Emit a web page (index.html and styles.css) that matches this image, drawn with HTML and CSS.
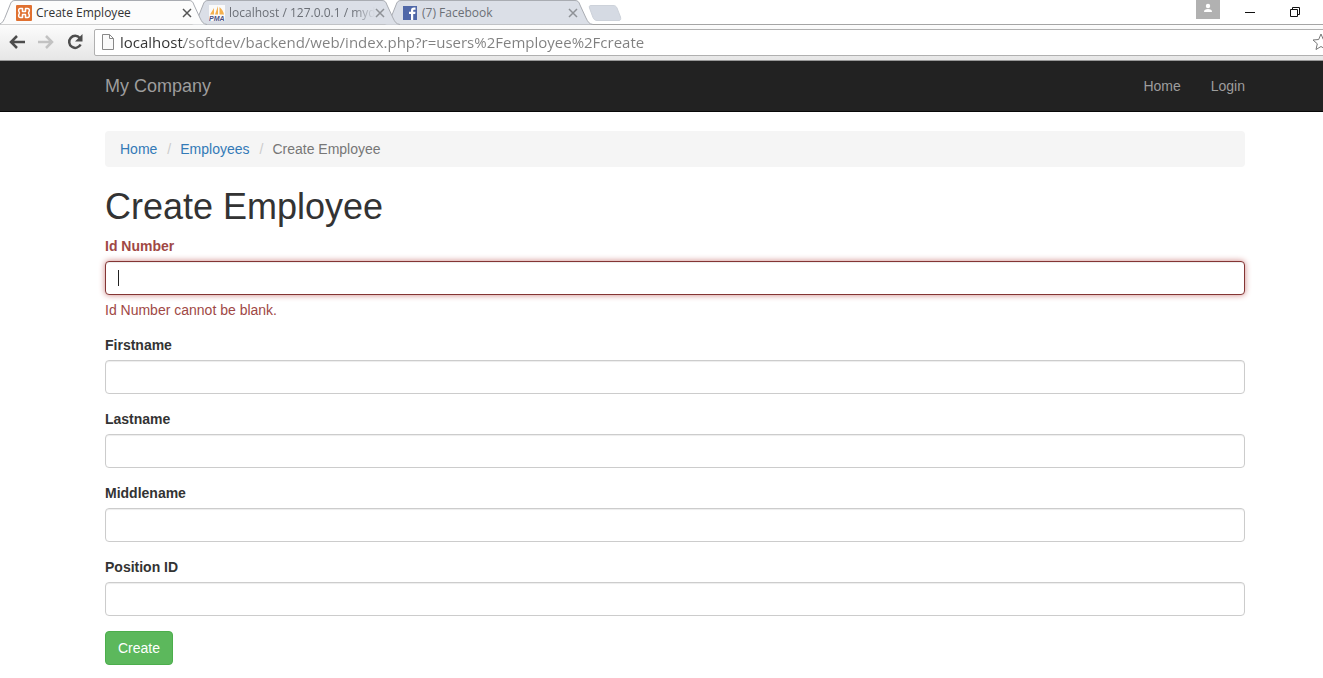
FILE: index.html
```html
<!DOCTYPE html>
<html lang="en">
<head>
<meta charset="utf-8">
<title>Create Employee</title>
<link rel="stylesheet" href="styles.css">
</head>
<body>
<div class="browser">
  <div class="tabstrip">
    <div class="tab tab-active">
      <svg class="tab-shape" viewBox="0 0 208 25" preserveAspectRatio="none"><path d="M0 24.5C4 23 5 20 7 15L11 5C12 2 13 .5 16 .5H190C193 .5 194 2 195 5L201 18C203 22 204 24 208 24.5"/></svg>
      <svg class="favicon" viewBox="0 0 16 16"><rect width="16" height="16" rx="1" fill="#e07030"/><path d="M4.500 3.500H6.500V6.500H9.500V3.500H11.500C13 3.500 13.500 4.500 13.300 6L12.500 8 13.300 10C13.500 11.500 13 12.500 11.500 12.500H9.500V9.500H6.500V12.500H4.500C3 12.500 2.500 11.500 2.700 10L3.500 8 2.700 6C2.500 4.500 3 3.500 4.500 3.500Z" fill="none" stroke="#fff" stroke-width="1.500" stroke-linejoin="round"/></svg>
      <span class="tab-title">Create Employee</span>
      <button class="tab-close" aria-label="Close tab"><svg viewBox="0 0 10 10"><path d="M1 1L9 9M9 1L1 9"/></svg></button>
    </div>
    <div class="tab tab-second">
      <svg class="tab-shape" viewBox="0 0 208 25" preserveAspectRatio="none"><path d="M0 24.5C4 23 5 20 7 15L11 5C12 2 13 .5 16 .5H190C193 .5 194 2 195 5L201 18C203 22 204 24 208 24.5"/></svg>
      <svg class="favicon" viewBox="0 0 16 16"><rect width="16" height="16" fill="#fafafa"/><path d="M1 9.500L5 3V9.500ZM6 9.500L9 1V9.500ZM10.500 9.500V2C13 4 14.500 7 15 9.500Z" fill="#f4b04e"/><text class="pma" x="0" y="16">PMA</text></svg>
      <span class="tab-title tab-title-long">localhost / 127.0.0.1 / myd</span>
      <button class="tab-close" aria-label="Close tab"><svg viewBox="0 0 10 10"><path d="M1 1L9 9M9 1L1 9"/></svg></button>
    </div>
    <div class="tab">
      <svg class="tab-shape" viewBox="0 0 208 25" preserveAspectRatio="none"><path d="M0 24.5C4 23 5 20 7 15L11 5C12 2 13 .5 16 .5H190C193 .5 194 2 195 5L201 18C203 22 204 24 208 24.5"/></svg>
      <svg class="favicon" viewBox="0 0 16 16"><rect x="1" y="1" width="14" height="14" fill="#5068a8"/><path d="M9 15V9H7V6.800H9V5.500C9 3.500 10 2.600 12 2.600H13.500V4.800H12.300C11.500 4.800 11.200 5.100 11.200 5.800V6.800H13.500L13.200 9H11.200V15Z" fill="#fff"/></svg>
      <span class="tab-title">(7) Facebook</span>
      <button class="tab-close" aria-label="Close tab"><svg viewBox="0 0 10 10"><path d="M1 1L9 9M9 1L1 9"/></svg></button>
    </div>
    <button class="new-tab" aria-label="New tab"><svg viewBox="0 0 34 16"><path d="M3 .5H25C27 .5 28 1 29 3L32.500 12C33 14.500 32.500 15.500 31 15.500H9C7 15.500 6 14.500 5 12.500L1.500 3C1 1 1.500 .5 3 .5Z" fill="#d5dae3" stroke="#cdd2da"/></svg></button>
    <div class="window-controls">
      <button class="profile" aria-label="Profile"><svg viewBox="0 0 24 19"><circle cx="12" cy="6" r="2.200"/><path d="M8 12C8 9.800 9.500 9 12 9S16 9.800 16 12Z"/></svg></button>
      <button class="win" aria-label="Minimize"><svg viewBox="0 0 12 12"><path d="M1 6.500H11"/></svg></button>
      <button class="win" aria-label="Restore"><svg viewBox="0 0 12 12"><path d="M1.500 3.500H8.500V10.500H1.500ZM3.500 3.500V1.500H10.500V8.500H8.500"/></svg></button>
    </div>
  </div>
  <div class="toolbar">
    <button class="tool" aria-label="Back"><svg viewBox="0 0 18 16"><path d="M9 2L3 8 9 14M3 8H17" stroke="#4d4d4d"/></svg></button>
    <button class="tool" aria-label="Forward"><svg viewBox="0 0 18 16"><path d="M9 2L15 8 9 14M15 8H1" stroke="#c2c2c2"/></svg></button>
    <button class="tool" aria-label="Reload"><svg viewBox="0 0 18 16"><path d="M13.800 4A6 6 0 1 0 14.600 10.500" stroke="#4d4d4d"/><path d="M16.500 0V7.500H9Z" fill="#4d4d4d"/></svg></button>
    <div class="omnibox">
      <svg class="page-icon" viewBox="0 0 12 16"><path d="M.5 .5H7.500L11.500 4.500V15.500H.5ZM7.500 .5V4.500H11.500"/></svg>
      <input class="url" aria-label="Address" value="localhost/softdev/backend/web/index.php?r=users%2Femployee%2Fcreate">
      <button class="star" aria-label="Bookmark"><svg viewBox="0 0 18 18"><path d="M9 1L11.300 6.500 17 7 12.700 10.800 14 16.500 9 13.500 4 16.500 5.300 10.800 1 7 6.700 6.500Z"/></svg></button>
    </div>
  </div>
</div>

<nav class="navbar">
  <a class="brand" href="#">My Company</a>
  <a class="nav-link" href="#">Home</a>
  <a class="nav-link" href="#">Login</a>
</nav>

<main class="content">
  <ul class="breadcrumb">
    <li><a href="#">Home</a></li>
    <li><a href="#">Employees</a></li>
    <li>Create Employee</li>
  </ul>
  <h1>Create Employee</h1>
  <form>
    <div class="form-group has-error">
      <label for="id-number">Id Number</label>
      <div class="field"><input class="form-control" id="id-number" type="text" aria-describedby="id-error"><span class="caret"></span></div>
      <div class="help-block" id="id-error">Id Number cannot be blank.</div>
    </div>
    <div class="form-group">
      <label for="firstname">Firstname</label>
      <input class="form-control" id="firstname" type="text">
    </div>
    <div class="form-group">
      <label for="lastname">Lastname</label>
      <input class="form-control" id="lastname" type="text">
    </div>
    <div class="form-group">
      <label for="middlename">Middlename</label>
      <input class="form-control" id="middlename" type="text">
    </div>
    <div class="form-group">
      <label for="position">Position ID</label>
      <input class="form-control" id="position" type="text">
    </div>
    <button class="btn" type="submit">Create</button>
  </form>
</main>
</body>
</html>
```

FILE: styles.css
```css
* { box-sizing: border-box; }
body {
  margin: 0;
  background: #fff;
  color: #333;
  font: 14px/20px "Liberation Sans", Arial, sans-serif;
  overflow-x: hidden;
}
button { border: 0; padding: 0; background: none; }
svg { display: block; }

/* Browser window */
.browser { font-family: "Open Sans", "Noto Sans", sans-serif; overflow: hidden; }
.tabstrip { display: flex; height: 25px; margin-left: -1px; box-shadow: inset 0 -1px #a5a5a5; }
.tab {
  position: relative;
  z-index: 1;
  display: flex;
  align-items: center;
  width: 208px;
  height: 25px;
  margin-right: -15px;
  padding: 0 15px 0 17px;
  color: #6b6f76;
}
.tab-active { z-index: 3; color: #333; }
.tab-second { z-index: 2; }
.tab-shape { position: absolute; inset: 0; z-index: -1; width: 100%; height: 100%; fill: #dbdfe7; stroke: #a9acb2; }
.tab-active .tab-shape { fill: #fcfcfc; }
.favicon { flex: none; width: 16px; height: 16px; margin-right: 4px; }
.pma { font: italic bold 7px "Liberation Sans", sans-serif; fill: #4a4f82; }
.tab-title { flex: 1; min-width: 0; overflow: hidden; white-space: nowrap; font-size: 12px; line-height: 16px; }
.tab-title-long { mask-image: linear-gradient(to right, #000 85%, transparent); }
.tab-close { flex: none; width: 10px; }
.tab-close svg { width: 10px; height: 10px; stroke: #8e9196; stroke-width: 1.5; }
.tab-active .tab-close svg { stroke: #555; }
.new-tab { width: 34px; margin: 5px 0 4px 10px; }
.window-controls { display: flex; gap: 24px; margin-left: auto; padding-right: 22px; align-items: flex-start; }
.profile { width: 24px; height: 19px; background: #b1b1b1; }
.profile svg { fill: #fff; }
.win { width: 12px; margin-top: 6px; }
.win + .win { margin-left: 9px; }
.win svg { width: 12px; height: 12px; fill: none; stroke: #111; }
.toolbar {
  display: flex;
  align-items: center;
  height: 36px;
  padding: 0 0 1px 8px;
  background: linear-gradient(#fcfcfc, #e6e6e6);
  border-bottom: 1px solid #999;
}
.tool { flex: none; width: 18px; margin-right: 11px; }
.tool:nth-child(3) { margin-right: 10px; }
.tool svg { width: 18px; height: 16px; fill: none; stroke-width: 2.5; }
.omnibox {
  display: flex;
  flex: 1;
  align-items: center;
  height: 27px;
  margin-right: -8px;
  padding-left: 7px;
  background: #fff;
  border: 1px solid #b0b0b0;
  border-radius: 2px;
}
.page-icon { flex: none; width: 12px; height: 16px; margin-right: 6px; fill: #fafafa; stroke: #888; }
.url {
  flex: 1;
  min-width: 0;
  padding: 0;
  border: 0;
  outline: 0;
  font: 15px/22px "Open Sans", "Noto Sans", sans-serif;
  color: transparent;
  background: linear-gradient(to right, #333 64px, #808080 64px);
  background-clip: text;
}
.star { flex: none; width: 18px; }
.star svg { fill: #fff; stroke: #777; }

/* Site header */
.navbar {
  display: flex;
  align-items: center;
  height: 51px;
  padding: 0 63px 0 105px;
  background: #222;
  border-bottom: 1px solid #080808;
}
.navbar a { color: #9d9d9d; text-decoration: none; }
.brand { margin-right: auto; font-size: 18px; }
.nav-link { padding: 15px; }

/* Page */
.content { padding: 19px 78px 13px 105px; }
.breadcrumb {
  display: flex;
  margin: 0 0 20px;
  padding: 8px 15px;
  list-style: none;
  color: #777;
  background: #f5f5f5;
  border-radius: 4px;
}
.breadcrumb a { color: #337ab7; text-decoration: none; }
.breadcrumb li + li::before { content: "/"; padding: 0 9px 0 10px; color: #ccc; }
h1 { margin: 0 0 9px; font-size: 36px; line-height: 40px; font-weight: 400; }
.form-group { margin-bottom: 15px; }
label { display: block; margin-bottom: 5px; font-weight: 700; }
.field { position: relative; }
.form-control {
  display: block;
  width: 100%;
  height: 34px;
  padding: 6px 12px;
  font: inherit;
  color: #555;
  background: #fff;
  border: 1px solid #ccc;
  border-radius: 4px;
  box-shadow: inset 0 1px 1px rgba(0, 0, 0, .075);
}
.has-error label, .help-block { color: #a04845; }
.has-error .form-control { border-color: #843534; box-shadow: inset 0 1px 1px rgba(0, 0, 0, .075), 0 0 6px #ce8483; }
.caret { position: absolute; left: 13px; top: 9px; width: 1px; height: 16px; background: #222; }
.help-block { margin-top: 5px; }
.btn {
  padding: 6px 12px;
  font: inherit;
  color: #fff;
  background: #5cb85c;
  border: 1px solid #4cae4c;
  border-radius: 4px;
}
```
